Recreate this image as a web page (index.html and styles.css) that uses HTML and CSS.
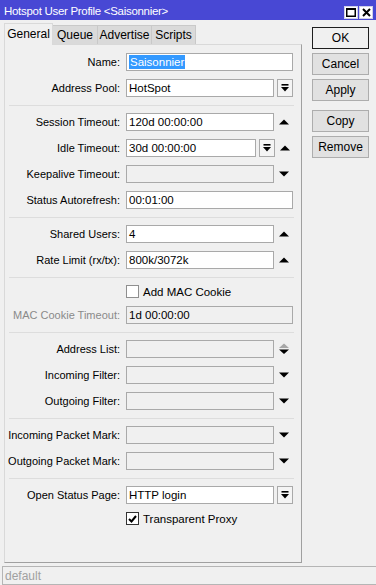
FILE: index.html
```html
<!DOCTYPE html>
<html>
<head>
    <title>Hotspot User Profile &lt;Saisonnier&gt;</title>
    <link rel="stylesheet" href="styles.css">
</head>
<body>
<div class="window">
    <div class="titlebar">
        <span class="title">Hotspot User Profile &lt;Saisonnier&gt;</span>
        <span class="winbtn"><svg width="10" height="9" viewBox="0 0 10 9"><rect x="0.75" y="0.75" width="8.5" height="7.5" fill="none" stroke="#000" stroke-width="1.5"/><rect x="0" y="0" width="10" height="2" fill="#000"/></svg></span>
        <span class="winbtn"><svg width="9" height="9" viewBox="0 0 9 9"><path d="M1 1L8 8M8 1L1 8" stroke="#000" stroke-width="2"/></svg></span>
    </div>

    <div class="main">
        <div class="left">
            <div class="tabs">
                <div class="tab active" style="width:49px">General</div>
                <div class="tab" style="width:46px">Queue</div>
                <div class="tab" style="width:55px">Advertise</div>
                <div class="tab" style="width:45px">Scripts</div>
            </div>

            <div class="panel">
                <div class="row">
                    <label class="lbl">Name:</label>
                    <div class="ctl"><div class="inp full"><span class="sel">Saisonnier</span></div></div>
                </div>
                <div class="row">
                    <label class="lbl">Address Pool:</label>
                    <div class="ctl"><div class="inp">HotSpot</div><span class="ddbtn"><svg width="8" height="8" viewBox="0 0 8 8"><rect x="0.5" y="0" width="7" height="1.6" fill="#000"/><polygon points="0,3 8,3 4,7.5" fill="#000"/></svg></span></div>
                </div>
                <div class="sep"></div>

                <div class="row">
                    <label class="lbl">Session Timeout:</label>
                    <div class="ctl"><div class="inp">120d 00:00:00</div><span class="arrow"><svg width="10" height="6" viewBox="0 0 10 6"><polygon points="0,5.5 10,5.5 5,0.5" fill="#000"/></svg></span></div>
                </div>
                <div class="row">
                    <label class="lbl">Idle Timeout:</label>
                    <div class="ctl"><div class="inp short">30d 00:00:00</div><span class="ddbtn"><svg width="8" height="8" viewBox="0 0 8 8"><rect x="0.5" y="0" width="7" height="1.6" fill="#000"/><polygon points="0,3 8,3 4,7.5" fill="#000"/></svg></span><span class="arrow"><svg width="10" height="6" viewBox="0 0 10 6"><polygon points="0,5.5 10,5.5 5,0.5" fill="#000"/></svg></span></div>
                </div>
                <div class="row">
                    <label class="lbl">Keepalive Timeout:</label>
                    <div class="ctl"><div class="inp off"></div><span class="arrow"><svg width="10" height="6" viewBox="0 0 10 6"><polygon points="0,0.5 10,0.5 5,5.5" fill="#000"/></svg></span></div>
                </div>
                <div class="row">
                    <label class="lbl">Status Autorefresh:</label>
                    <div class="ctl"><div class="inp full">00:01:00</div></div>
                </div>
                <div class="sep"></div>

                <div class="row">
                    <label class="lbl">Shared Users:</label>
                    <div class="ctl"><div class="inp">4</div><span class="arrow"><svg width="10" height="6" viewBox="0 0 10 6"><polygon points="0,5.5 10,5.5 5,0.5" fill="#000"/></svg></span></div>
                </div>
                <div class="row">
                    <label class="lbl">Rate Limit (rx/tx):</label>
                    <div class="ctl"><div class="inp">800k/3072k</div><span class="arrow"><svg width="10" height="6" viewBox="0 0 10 6"><polygon points="0,5.5 10,5.5 5,0.5" fill="#000"/></svg></span></div>
                </div>
                <div class="sep"></div>

                <div class="row check-row">
                    <span class="lbl"></span>
                    <div class="ctl"><span class="box"></span><span class="check-text">Add MAC Cookie</span></div>
                </div>
                <div class="row">
                    <label class="lbl dim">MAC Cookie Timeout:</label>
                    <div class="ctl"><div class="inp full off">1d 00:00:00</div></div>
                </div>
                <div class="sep"></div>

                <div class="row">
                    <label class="lbl">Address List:</label>
                    <div class="ctl"><div class="inp off"></div><span class="arrow"><svg width="10" height="12" viewBox="0 0 10 12"><polygon points="0,5 10,5 5,0.5" fill="#a8a8a8"/><polygon points="0,6.5 10,6.5 5,11" fill="#000"/></svg></span></div>
                </div>
                <div class="row">
                    <label class="lbl">Incoming Filter:</label>
                    <div class="ctl"><div class="inp off"></div><span class="arrow"><svg width="10" height="6" viewBox="0 0 10 6"><polygon points="0,0.5 10,0.5 5,5.5" fill="#000"/></svg></span></div>
                </div>
                <div class="row">
                    <label class="lbl">Outgoing Filter:</label>
                    <div class="ctl"><div class="inp off"></div><span class="arrow"><svg width="10" height="6" viewBox="0 0 10 6"><polygon points="0,0.5 10,0.5 5,5.5" fill="#000"/></svg></span></div>
                </div>
                <div class="sep"></div>

                <div class="row">
                    <label class="lbl">Incoming Packet Mark:</label>
                    <div class="ctl"><div class="inp off"></div><span class="arrow"><svg width="10" height="6" viewBox="0 0 10 6"><polygon points="0,0.5 10,0.5 5,5.5" fill="#000"/></svg></span></div>
                </div>
                <div class="row">
                    <label class="lbl">Outgoing Packet Mark:</label>
                    <div class="ctl"><div class="inp off"></div><span class="arrow"><svg width="10" height="6" viewBox="0 0 10 6"><polygon points="0,0.5 10,0.5 5,5.5" fill="#000"/></svg></span></div>
                </div>
                <div class="sep"></div>

                <div class="row">
                    <label class="lbl">Open Status Page:</label>
                    <div class="ctl"><div class="inp">HTTP login</div><span class="ddbtn"><svg width="8" height="8" viewBox="0 0 8 8"><rect x="0.5" y="0" width="7" height="1.6" fill="#000"/><polygon points="0,3 8,3 4,7.5" fill="#000"/></svg></span></div>
                </div>
                <div class="row check-row">
                    <span class="lbl"></span>
                    <div class="ctl"><span class="box checked"><svg width="9" height="8" viewBox="0 0 9 8"><path d="M1 4L3.5 6.5L8 1" fill="none" stroke="#000" stroke-width="2"/></svg></span><span class="check-text">Transparent Proxy</span></div>
                </div>
            </div>
        </div>

        <div class="right">
            <button class="btn default">OK</button>
            <button class="btn">Cancel</button>
            <button class="btn">Apply</button>
            <button class="btn gap">Copy</button>
            <button class="btn">Remove</button>
        </div>
    </div>

    <div class="statusbar">default</div>
</div>
</body>
</html>
```

FILE: styles.css
```css
* {
    margin: 0;
    padding: 0;
    box-sizing: border-box;
}

body {
    font-family: "Liberation Sans", Arial, sans-serif;
    font-size: 11px;
    color: #000;
    background-color: #f0f0f0;
    width: 376px;
    height: 585px;
    overflow: hidden;
}

.window {
    display: flex;
    flex-direction: column;
    height: 585px;
}

/* Title bar */
.titlebar {
    height: 20px;
    background-color: #4848d4;
    display: flex;
    align-items: center;
    padding-left: 4px;
    padding-right: 3px;
}

.title {
    color: #fff;
    font-size: 11.5px;
    letter-spacing: -0.3px;
    flex: 1;
    padding-top: 1px;
}

.winbtn {
    width: 14px;
    height: 13px;
    margin-top: 5px;
    margin-left: 1px;
    background-color: #fff;
    border: 1px solid #d0d0e8;
    display: flex;
    align-items: center;
    justify-content: center;
}

/* Main area */
.main {
    display: flex;
}

.left {
    margin-left: 4px;
    width: 298px;
}

.tabs {
    display: flex;
    align-items: flex-end;
    height: 24px;
}

.tab {
    height: 19px;
    background-color: #dadada;
    border: 1px solid #c9c9c9;
    border-bottom: none;
    margin-right: -1px;
    font-size: 12px;
    display: flex;
    align-items: center;
    justify-content: center;
}

.tab.active {
    height: 22px;
    background-color: #f0f0f0;
    border-color: #d9d9d9;
    position: relative;
    z-index: 1;
    margin-bottom: -1px;
    padding-bottom: 2px;
}

.panel {
    height: 519px;
    border: 1px solid #d9d9d9;
    border-right-color: #a0a0a0;
    border-bottom-color: #a0a0a0;
    padding-top: 8px;
}

.row {
    display: flex;
    align-items: center;
    height: 18px;
    margin-bottom: 8px;
}

.check-row {
    height: 13px;
}

.lbl {
    width: 115px;
    text-align: right;
    white-space: nowrap;
    font-size: 11px;
}

.lbl.dim {
    color: #8a8a8a;
}

.ctl {
    margin-left: 6px;
    display: flex;
    align-items: center;
    height: 100%;
}

.inp {
    width: 148px;
    height: 18px;
    background-color: #fff;
    border: 1px solid #a9a9a9;
    padding-left: 2px;
    display: flex;
    align-items: center;
    font-size: 11.5px;
    white-space: nowrap;
}

.inp.full {
    width: 167px;
}

.inp.short {
    width: 130px;
}

.inp.off {
    background-color: #f0f0f0;
}

.sel {
    background-color: #3399ff;
    color: #fff;
    padding: 0 1px;
    line-height: 14px;
}

.ddbtn {
    width: 16px;
    height: 18px;
    margin-left: 3px;
    border: 1px solid #a9a9a9;
    background-color: #f4f4f4;
    display: flex;
    align-items: center;
    justify-content: center;
}

.arrow {
    width: 18px;
    height: 18px;
    margin-left: 1px;
    display: flex;
    align-items: center;
    justify-content: center;
}

.box {
    width: 13px;
    height: 13px;
    border: 1px solid #8f8f8f;
    background-color: #fff;
    display: flex;
    align-items: center;
    justify-content: center;
}

.box.checked {
    border-color: #333;
}

.check-text {
    margin-left: 4px;
    font-size: 11.5px;
}

.sep {
    height: 1px;
    margin: 1px 7px 7px 4px;
    background-color: #dddddd;
}

/* Right buttons */
.right {
    margin-left: 10px;
    margin-top: 7px;
    display: flex;
    flex-direction: column;
}

.btn {
    width: 57px;
    height: 22px;
    margin-bottom: 4px;
    background-color: #e1e1e1;
    border: 1px solid #adadad;
    font-family: "Liberation Sans", Arial, sans-serif;
    font-size: 12px;
    color: #000;
}

.btn.default {
    border: 1px solid #1e1e1e;
    background-color: #f0f0f0;
}

.btn.gap {
    margin-top: 5px;
}

/* Status bar */
.statusbar {
    margin: 3px 0 0 2px;
    height: 19px;
    border: 1px solid #b5b5b5;
    border-right: none;
    color: #a0a0a0;
    font-size: 12px;
    padding-left: 2px;
    display: flex;
    align-items: center;
}
```
